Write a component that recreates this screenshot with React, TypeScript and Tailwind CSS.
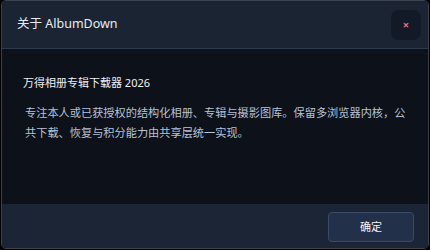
export default function App() {
  const font = { fontFamily: '"Noto Sans", "Noto Sans CJK SC", sans-serif' };
  return (
    <div className="w-[430px] h-[250px] bg-black px-px pb-px" style={font}>
      <div className="flex flex-col h-[249px] border border-[#3a414d] rounded-[5px] overflow-hidden">
        <div className="h-[48px] shrink-0 flex items-center justify-between pl-[15px] pr-[7px] bg-[#1b2433] border-b border-[#2e3a4d]">
          <span className="text-[12.5px] text-[#e8ecf2]">关于 AlbumDown</span>
          <button className="w-[30px] h-[30px] rounded-[8px] bg-[#121a27] flex items-center justify-center text-[#f26b7a] text-[11px] font-bold leading-none">×</button>
        </div>
        <div className="flex-1 bg-[#0d111a] pl-[21px] pr-[18px] pt-[24px]">
          <div className="text-[11px] leading-[20px] text-[#eef1f6]">万得相册专辑下载器 2026</div>
          <p className="mt-[10px] pl-[2px] text-[11.2px] leading-[20px] text-[#b6c2d6]">
            专注本人或已获授权的结构化相册、专辑与摄影图库。保留多浏览器内核，公共下载、恢复与积分能力由共享层统一实现。
          </p>
        </div>
        <div className="h-[44px] shrink-0 bg-[#1b2535] flex justify-end items-start pt-[8px] pr-[14px]">
          <button className="w-[86px] h-[30px] rounded-[4px] bg-[#22304a] border border-[#3b4a63] text-[11px] text-[#f1f4f8] flex items-center justify-center">确定</button>
        </div>
      </div>
    </div>
  );
}
